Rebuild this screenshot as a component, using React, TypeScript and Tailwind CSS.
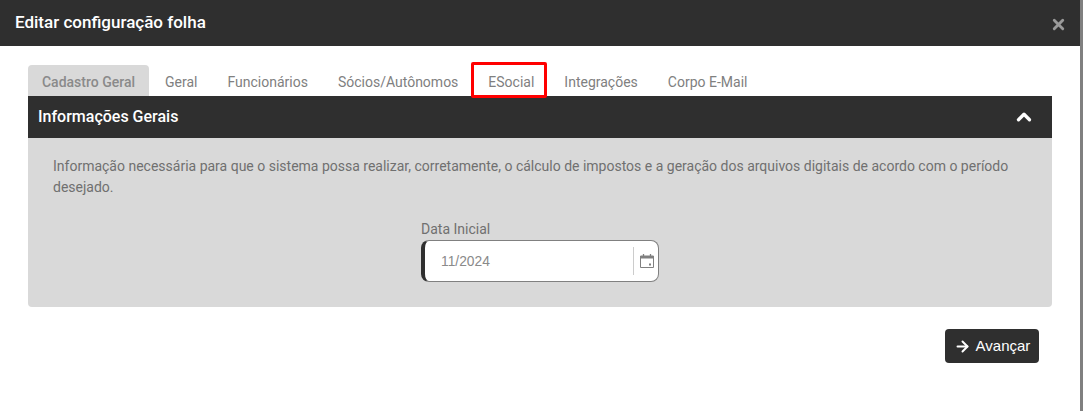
import React from 'react';
import { ArrowRight, ChevronUp, X } from 'lucide-react';

const tabs = ['Geral', 'Funcionários', 'Sócios/Autônomos', 'ESocial', 'Integrações', 'Corpo E-Mail'];

export default function App() {
  return (
    <div className="h-[411px] w-[1083px] overflow-hidden bg-white font-['Roboto',sans-serif] flex">
      <div className="w-[1080px] flex flex-col">
        <header className="h-[46px] bg-[#2f2f2f] flex items-center justify-between pl-[15px] pr-[13px]">
          <h1 className="text-[17px] font-medium text-white">Editar configuração folha</h1>
          <X size={17} strokeWidth={4} className="text-[#9a9a9a] mt-[2px]" />
        </header>

        <div className="pt-[19px] px-[28px]">
          <nav className="flex h-[31px] items-stretch text-[14px] text-[#808080]">
            <div className="w-[121px] mr-px rounded-t-[4px] bg-[#d9d9d9] flex items-center justify-center font-medium text-[#8a8a8a] pt-[3px]">
              Cadastro Geral
            </div>
            {tabs.map((t) => (
              <div key={t} className="relative flex items-center justify-center px-[15px] pt-[3px] whitespace-nowrap">
                {t}
                {t === 'ESocial' && (
                  <span className="absolute z-10 -left-[2px] right-[2px] -top-[3px] bottom-[-2px] border-[3px] border-[#ff0000] rounded-[2px]" />
                )}
              </div>
            ))}
          </nav>

          <section className="rounded-b-[4px] bg-[#d9d9d9]">
            <div className="h-[42px] bg-[#2f2f2f] flex items-center justify-between pl-[10px] pr-[17px]">
              <h2 className="text-[16px] font-medium text-white">Informações Gerais</h2>
              <ChevronUp size={22} strokeWidth={3.6} className="text-white" />
            </div>
            <div className="h-[169px] pt-[18px] px-[25px]">
              <p className="text-[14px] leading-[21px] text-[#707070]">
                Informação necessária para que o sistema possa realizar, corretamente, o cálculo de impostos e a geração dos arquivos digitais de acordo com o período desejado.
              </p>
              <div className="mt-[21px] w-[238px] mx-auto">
                <label className="block text-[14px] leading-[20px] text-[#707070]">Data Inicial</label>
                <div className="mt-[1px] h-[42px] rounded-[8px] border border-[#808080] border-l-[4px] border-l-[#2f2f2f] bg-white flex items-center pl-[16px] pr-[3px]">
                  <span className="flex-1 pt-[2px] text-[13.8px] text-[#8a8a8a] font-['Liberation_Sans',sans-serif]">11/2024</span>
                  <div className="h-[28px] w-px bg-[#cccccc]" />
                  <svg width="16" height="16" viewBox="0 0 16 16" fill="none" className="ml-[5px] text-[#808080]">
                    <path d="M1.5 3h13v11.5h-13z" stroke="currentColor" strokeWidth="1" strokeLinejoin="round" />
                    <path d="M1.5 3h13v2.5h-13z" fill="currentColor" />
                    <path d="M4.5 1v3M11.5 1v3" stroke="currentColor" strokeWidth="1.3" />
                    <rect x="10" y="10.5" width="2" height="2" fill="currentColor" />
                  </svg>
                </div>
              </div>
            </div>
          </section>

          <div className="mt-[22px] flex justify-end pr-[13px]">
            <button className="h-[34px] w-[94px] rounded-[4px] bg-[#2f2f2f] text-white text-[15px] font-['Liberation_Sans',sans-serif] flex items-center justify-center gap-[5px]">
              <ArrowRight size={17} strokeWidth={2.8} />
              Avançar
            </button>
          </div>
        </div>
      </div>
      <div className="w-[3px] bg-[#808080]" />
    </div>
  );
}
